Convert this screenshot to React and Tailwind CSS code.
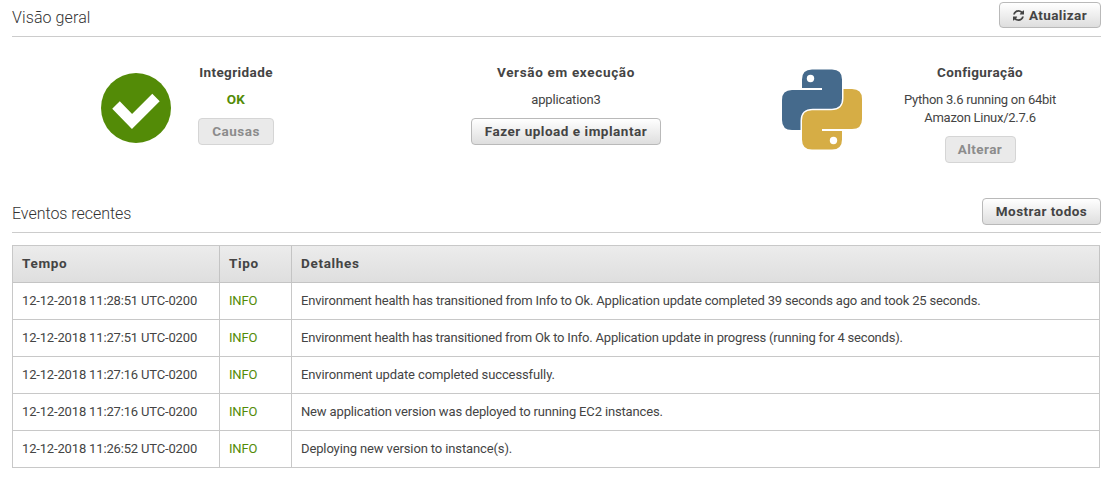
const events = [
  ['12-12-2018 11:28:51 UTC-0200', 'Environment health has transitioned from Info to Ok. Application update completed 39 seconds ago and took 25 seconds.', 'tracking-[-0.175px]'],
  ['12-12-2018 11:27:51 UTC-0200', 'Environment health has transitioned from Ok to Info. Application update in progress (running for 4 seconds).', 'tracking-[-0.19px]'],
  ['12-12-2018 11:27:16 UTC-0200', 'Environment update completed successfully.', 'tracking-[-0.11px]'],
  ['12-12-2018 11:27:16 UTC-0200', 'New application version was deployed to running EC2 instances.', 'tracking-[-0.15px]'],
  ['12-12-2018 11:26:52 UTC-0200', 'Deploying new version to instance(s).', 'tracking-[-0.12px]'],
];

function Button({ children, disabled, className }) {
  const tone = disabled
    ? 'border-[#d5d5d5] bg-[#eaeaea] text-[#8c8c8c]'
    : 'border-[#b9b9b9] bg-linear-to-b from-white to-[#dedede] text-[#444]';
  return (
    <button
      disabled={disabled}
      className={`flex shrink-0 items-center justify-center whitespace-nowrap rounded-[4px] border text-[13.5px] leading-[18px] font-bold ${tone} ${className}`}
    >
      {children}
    </button>
  );
}

function RefreshIcon() {
  return (
    <svg viewBox="0 0 1536 1536" className="mr-[5px] h-[11px] w-[11px] fill-current" aria-hidden="true">
      <path d="M1511 928q0 5-1 7-64 268-268 434.500t-478 166.500q-146 0-282.500-55t-243.500-157l-129 129q-19 19-45 19t-45-19-19-45v-448q0-26 19-45t45-19h448q26 0 45 19t19 45-19 45l-137 137q71 66 161 102t187 36q134 0 250-65t186-179q11-17 53-117 8-23 30-23h192q13 0 22.500 9.500t9.500 22.500zm25-800v448q0 26-19 45t-45 19h-448q-26 0-45-19t-19-45 19-45l138-138q-148-137-349-137-134 0-250 65t-186 179q-11 17-53 117-8 23-30 23h-199q-13 0-22.500-9.500t-9.500-22.500v-7q65-268 270-434.500t480-166.500q146 0 284 55.500t245 156.500l130-129q19-19 45-19t45 19 19 45z" />
    </svg>
  );
}

function CheckIcon() {
  return (
    <svg viewBox="0 0 70 70" className="mt-[9px] h-[70px] w-[70px] shrink-0" aria-hidden="true">
      <circle cx="35" cy="35" r="35" fill="#538b07" />
      <path
        d="M15 32L31 48.500L55 24.500"
        fill="none"
        stroke="#fff"
        strokeWidth="10.500"
        strokeLinejoin="miter"
      />
    </svg>
  );
}

function PythonLogo() {
  const half = 'M30 .5H50Q60 .5 60 10.500V29.500Q60 39.700 50 39.700H31Q18.500 39.700 18.500 52V61H10Q0 61 0 51V31Q0 21 10 21H40V19H20V10.500Q20 .5 30 .5Z';
  return (
    <svg viewBox="0 0 80 81" className="mt-[5px] h-[81px] w-[80px] shrink-0" aria-hidden="true">
      <path d={half} fill="#456a8c" />
      <circle cx="28.500" cy="9.500" r="3.700" fill="#fff" />
      <path d={half} fill="#d6ad45" transform="rotate(180 40 40.500)" />
      <circle cx="51.500" cy="71.500" r="3.700" fill="#fff" />
    </svg>
  );
}

export default function App() {
  return (
    <main className="h-[478px] w-[1107px] overflow-hidden bg-white pl-3 pr-[6px] font-[Roboto,sans-serif] text-[13px] leading-[18px] text-[#444]">
      <header className="flex h-[37px] items-start justify-between border-b border-[#ccc] pt-[2px]">
        <h2 className="pt-[6px] text-[16px] leading-[20px] font-light tracking-[0.1px] text-[#333]">Visão geral</h2>
        <Button className="h-[26px] w-[102px] tracking-[0.4px]"><RefreshIcon />Atualizar</Button>
      </header>

      <section className="flex h-[151px] pt-[27px]">
        <div className="flex w-[354px] pl-[89px]">
          <CheckIcon />
          <div className="ml-[15px] flex w-[100px] flex-col items-center">
            <h3 className="pb-[2px] text-[13.5px] leading-[16px] font-bold tracking-[0.4px]">Integridade</h3>
            <p className="mt-[9px] pb-[2px] text-[13.5px] leading-[16px] font-bold tracking-[0.3px] text-[#538b07]">OK</p>
            <Button disabled className="mt-[9px] h-[27px] w-[76px] pb-[2px] tracking-[0.5px]">Causas</Button>
          </div>
        </div>
        <div className="flex w-[400px] flex-col items-center">
          <h3 className="pb-[2px] text-[13.5px] leading-[16px] font-bold tracking-[0.67px]">Versão em execução</h3>
          <p className="mt-[9px] tracking-[-0.15px]">application3</p>
          <Button className="mt-[9px] h-[27px] w-[190px] pb-[2px] tracking-[0.52px]">Fazer upload e implantar</Button>
        </div>
        <div className="flex pl-[16px]">
          <PythonLogo />
          <div className="ml-[18px] flex w-[200px] flex-col items-center">
            <h3 className="pb-[2px] text-[13.5px] leading-[16px] font-bold tracking-[0.37px]">Configuração</h3>
            <p className="mt-[9px] whitespace-nowrap text-center tracking-[-0.26px]">Python 3.6 running on 64bit<br />Amazon Linux/2.7.6</p>
            <Button disabled className="mt-[9px] h-[27px] w-[71px] pb-[2px] tracking-[0.43px]">Alterar</Button>
          </div>
        </div>
      </section>

      <header className="flex h-[45px] items-start justify-between border-b border-[#ccc] pt-[10px]">
        <h2 className="pt-[6px] text-[16px] leading-[20px] font-light tracking-[-0.03px] text-[#333]">Eventos recentes</h2>
        <Button className="h-[27px] w-[119px] pb-[2px] tracking-[0.47px]">Mostrar todos</Button>
      </header>

      <table className="mt-3 w-[1088px] table-fixed border-separate border-spacing-0 border-t border-l border-[#c8c8c8] text-left">
        <colgroup>
          <col className="w-[207px]" />
          <col className="w-[72px]" />
          <col />
        </colgroup>
        <thead>
          <tr className="h-[37px] bg-linear-to-b from-[#ececec] to-[#dedede]">
            {['Tempo', 'Tipo', 'Detalhes'].map((label) => (
              <th key={label} className="border-r border-b border-[#c4c4c4] px-[9px] pt-0 pb-[2px] text-[13.5px] font-bold tracking-[0.68px]">{label}</th>
            ))}
          </tr>
        </thead>
        <tbody>
          {events.map(([time, detail, tracking]) => (
            <tr key={time + detail} className="h-[37px]">
              <td className="whitespace-nowrap border-r border-b border-[#c8c8c8] px-[9px] py-0 tracking-[-0.16px]">{time}</td>
              <td className="border-r border-b border-[#c8c8c8] px-[9px] py-0 tracking-[-0.2px] text-[#538b07]">INFO</td>
              <td className={`whitespace-nowrap border-r border-b border-[#c8c8c8] px-[9px] py-0 ${tracking}`}>{detail}</td>
            </tr>
          ))}
        </tbody>
      </table>
    </main>
  );
}
